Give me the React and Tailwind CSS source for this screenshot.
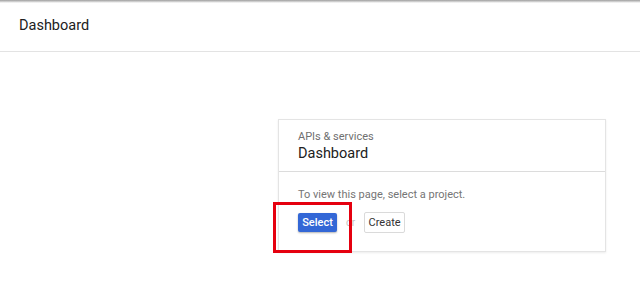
const App = () => {
  return (
    <div className="w-[640px] h-[295px] bg-white overflow-hidden font-['Roboto',_'Liberation_Sans',_sans-serif] relative">
      <div className="h-[3px] bg-gradient-to-b from-[#9e9e9e] to-white" />
      <header className="h-[49px] border-b border-[#e3e3e3] flex items-center pl-[19px] pb-[1px]">
        <h1 className="text-[14.5px] text-[#212121] leading-none">Dashboard</h1>
      </header>

      <div className="ml-[278px] mt-[67px] w-[328px] border border-[#e4e4e4] shadow-[0_1px_2px_rgba(0,0,0,0.08)]">
        <div className="h-[52px] border-b border-[#dcdcdc] pl-[19px] pt-[10px]">
          <div className="text-[11px] leading-[13px] text-[#6f6f6f]">APIs &amp; services</div>
          <div className="text-[14.5px] leading-[19px] text-[#212121] mt-[1px]">Dashboard</div>
        </div>
        <div className="pl-[19px] pt-[16px] pb-[18px]">
          <p className="text-[11px] leading-[13px] text-[#757575]">To view this page, select a project.</p>
          <div className="flex items-center mt-[11px]">
            <button className="h-[19px] w-[39px] rounded-[2px] bg-[#3367d6] text-white text-[11px] font-medium shadow-[0_1px_2px_rgba(0,0,0,0.3)] leading-none">
              Select
            </button>
            <span className="ml-[9px] text-[10px] text-[#c2c2c2]">or</span>
            <button className="ml-[9px] h-[21px] w-[41px] rounded-[2px] border border-[#dadada] bg-white text-[11px] text-[#333] leading-none">
              Create
            </button>
          </div>
        </div>
      </div>

      <div className="absolute left-[273px] top-[202px] w-[79px] h-[51px] border-[3px] border-[#e5000f]" />
    </div>
  );
};

export default App;
